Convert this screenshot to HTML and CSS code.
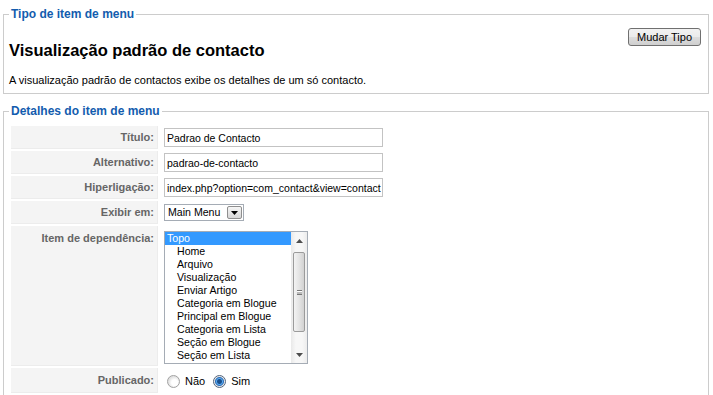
FILE: index.html
```html
<!DOCTYPE html>
<html lang="pt">
<head>
    <meta charset="UTF-8">
    <title>Item de menu: [Editar]</title>
    <link rel="stylesheet" href="styles.css">
</head>
<body>
    <fieldset class="adminform">
        <legend>Tipo de item de menu</legend>
        <button type="button" class="change-type">Mudar Tipo</button>
        <h2 class="type-title">Visualização padrão de contacto</h2>
        <p class="type-desc">A visualização padrão de contactos exibe os detalhes de um só contacto.</p>
    </fieldset>

    <fieldset class="adminform details">
        <legend>Detalhes do item de menu</legend>
        <table class="admintable">
            <tr>
                <td class="key">Título:</td>
                <td class="value"><input class="inputbox" type="text" value="Padrao de Contacto"></td>
            </tr>
            <tr>
                <td class="key">Alternativo:</td>
                <td class="value"><input class="inputbox" type="text" value="padrao-de-contacto"></td>
            </tr>
            <tr>
                <td class="key">Hiperligação:</td>
                <td class="value"><input class="inputbox" type="text" value="index.php?option=com_contact&amp;view=contact" readonly></td>
            </tr>
            <tr>
                <td class="key">Exibir em:</td>
                <td class="value">
                    <div class="dropdown">
                        <span class="dropdown-value">Main Menu</span>
                        <span class="dropdown-btn">
                            <svg width="7" height="4" viewBox="0 0 7 4"><path d="M0 0h7L3.5 4z" fill="#000"/></svg>
                        </span>
                    </div>
                </td>
            </tr>
            <tr>
                <td class="key key-top">Item de dependência:</td>
                <td class="value">
                    <div class="listbox">
                        <ul class="listbox-items">
                            <li class="selected">Topo</li>
                            <li class="sub">Home</li>
                            <li class="sub">Arquivo</li>
                            <li class="sub">Visualização</li>
                            <li class="sub">Enviar Artigo</li>
                            <li class="sub">Categoria em Blogue</li>
                            <li class="sub">Principal em Blogue</li>
                            <li class="sub">Categoria em Lista</li>
                            <li class="sub">Seção em Blogue</li>
                            <li class="sub">Seção em Lista</li>
                        </ul>
                        <div class="scrollbar">
                            <span class="sb-btn">
                                <svg width="7" height="4" viewBox="0 0 7 4"><path d="M0 4h7L3.5 0z" fill="#4d4d4d"/></svg>
                            </span>
                            <div class="sb-track">
                                <div class="sb-thumb"><span class="grip"></span></div>
                            </div>
                            <span class="sb-btn">
                                <svg width="7" height="4" viewBox="0 0 7 4"><path d="M0 0h7L3.5 4z" fill="#4d4d4d"/></svg>
                            </span>
                        </div>
                    </div>
                </td>
            </tr>
            <tr>
                <td class="key">Publicado:</td>
                <td class="value">
                    <div class="radios">
                        <input type="radio" name="published" id="pub0">
                        <label for="pub0">Não</label>
                        <input type="radio" name="published" id="pub1" checked>
                        <label for="pub1">Sim</label>
                    </div>
                </td>
            </tr>
        </table>
    </fieldset>
</body>
</html>
```

FILE: styles.css
```css
* {
    box-sizing: border-box;
}

body {
    margin: 0;
    padding: 7px 4px 0 3px;
    font-family: "Liberation Sans", Arial, sans-serif;
    font-size: 11px;
    color: #000;
    background: #fff;
}

fieldset.adminform {
    margin: 0;
    padding: 0 7px 6px 5px;
    border: 1px solid #ccc;
}

fieldset.adminform legend {
    padding: 0 2px;
    color: #135cae;
    font-size: 12px;
    font-weight: bold;
    line-height: 14px;
}

fieldset.details {
    margin-top: 10px;
    padding-bottom: 10px;
}

.change-type {
    float: right;
    margin-top: 7px;
    width: 73px;
    height: 18px;
    padding: 0;
    font-family: "Liberation Sans", Arial, sans-serif;
    font-size: 11px;
    color: #000;
    border: 1px solid #707070;
    border-radius: 3px;
    background: linear-gradient(#f2f2f2 0%, #ebebeb 50%, #dddddd 51%, #cfcfcf 100%);
}

.type-title {
    margin: 19px 0 0;
    font-size: 16.5px;
    line-height: 20px;
    font-weight: bold;
}

.type-desc {
    margin: 14px 0 0;
    line-height: 13px;
}

/* details table */
.admintable {
    margin-top: 6px;
    border-spacing: 2px;
}

.admintable td {
    padding: 2px 4px;
    line-height: 13px;
}

.admintable td.key {
    width: 147px;
    padding: 2px 3px;
    text-align: right;
    font-weight: bold;
    color: #666;
    background: #f4f4f4;
    border-bottom: 1px solid #ececec;
    border-right: 1px solid #ececec;
}

.admintable td.key-top {
    vertical-align: top;
    padding-top: 6px;
}

.inputbox {
    display: block;
    width: 219px;
    height: 19px;
    margin: 0;
    padding: 0 1px 0 2px;
    border: 1px solid #c3c3c3;
    font-family: "Liberation Sans", Arial, sans-serif;
    font-size: 10.5px;
    color: #000;
    overflow: hidden;
}

.dropdown {
    display: flex;
    align-items: center;
    width: 80px;
    height: 17px;
    margin: 1px 0;
    padding: 0 1px 0 3px;
    border: 1px solid #a5acb5;
    background: #fff;
    font-size: 10.6px;
}

.dropdown-value {
    flex: 1;
}

.dropdown-btn {
    display: flex;
    align-items: center;
    justify-content: center;
    width: 15px;
    height: 13px;
    border: 1px solid #8f8f8f;
    border-radius: 2px;
    background: linear-gradient(#f6f6f6, #d6d6d6);
}

.listbox {
    display: flex;
    width: 144px;
    height: 133px;
    margin-top: 3px;
    border: 1px solid #a5acb5;
    background: #fff;
    font-size: 10.6px;
}

.listbox-items {
    flex: 1;
    margin: 0;
    padding: 0;
    list-style: none;
    overflow: hidden;
}

.listbox-items li {
    padding-left: 2px;
    line-height: 13px;
    white-space: nowrap;
}

.listbox-items li.sub {
    padding-left: 12px;
}

.listbox-items li.selected {
    background: #3399ff;
    color: #fff;
}

.scrollbar {
    display: flex;
    flex-direction: column;
    width: 16px;
    background: linear-gradient(to right, #e9e9e9, #f7f7f7 30%, #f7f7f7 70%, #ececec);
}

.sb-btn {
    display: flex;
    align-items: center;
    justify-content: center;
    height: 17px;
}

.sb-track {
    flex: 1;
    padding: 3px 2px 0;
}

.sb-thumb {
    display: flex;
    align-items: center;
    justify-content: center;
    height: 80px;
    border: 1px solid #9b9b9b;
    border-radius: 2px;
    background: linear-gradient(to right, #f3f3f3, #e4e4e4 50%, #d2d2d2);
}

.grip {
    width: 5px;
    height: 5px;
    border-top: 1px solid #777;
    border-bottom: 1px solid #777;
    background: linear-gradient(#fff 0 1px, #777 1px 2px, #fff 2px);
    background-size: 100% 3px;
    background-position: 0 0.5px;
}

.radios {
    display: flex;
    align-items: center;
    height: 19px;
    margin-top: 2px;
}

.radios input {
    appearance: none;
    width: 13px;
    height: 13px;
    margin: 0 5px 0 3px;
    border: 1px solid #a2a2a2;
    border-radius: 50%;
    background: radial-gradient(circle at 60% 60%, #fff 0 3px, #e2e2e2 6px);
}

.radios input:checked {
    border-color: #50627a;
    background: radial-gradient(circle at 50% 50%, #1a4f8c 0 2px, #5aaaf0 3px, #2f6fb8 4px, #e8e8e8 5px, #fff 6px);
}

.radios label {
    margin-right: 5px;
}
```
